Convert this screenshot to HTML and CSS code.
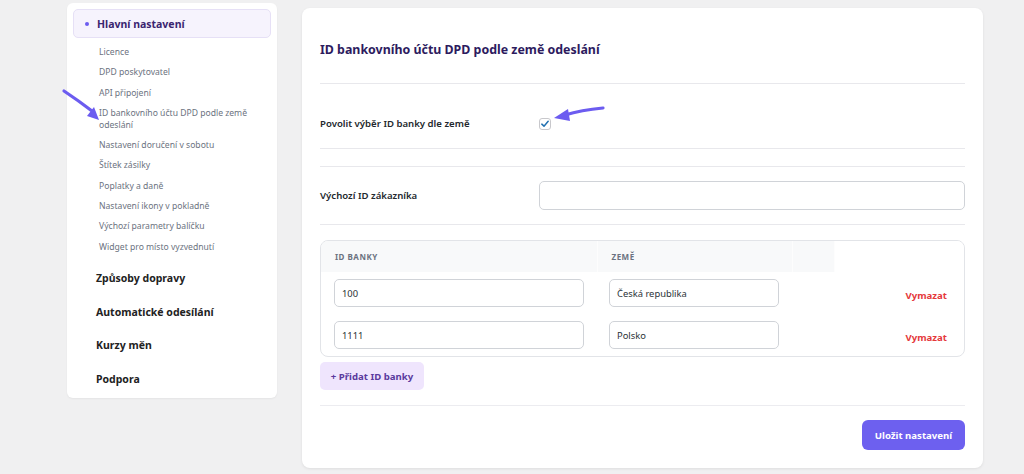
FILE: index.html
```html
<!DOCTYPE html>
<html lang="cs">
<head>
<meta charset="utf-8">
<title>Nastavení DPD</title>
<link rel="stylesheet" href="styles.css">
</head>
<body>
<div class="page">
  <aside class="sidebar">
    <div class="active-item"><span class="dot"></span>Hlavní nastavení</div>
    <ul class="sub">
      <li>Licence</li>
      <li>DPD poskytovatel</li>
      <li>API připojení</li>
      <li>ID bankovního účtu DPD podle země odeslání</li>
      <li>Nastavení doručení v sobotu</li>
      <li>Štítek zásilky</li>
      <li>Poplatky a daně</li>
      <li>Nastavení ikony v pokladně</li>
      <li>Výchozí parametry balíčku</li>
      <li>Widget pro místo vyzvednutí</li>
    </ul>
    <ul class="main-nav">
      <li>Způsoby dopravy</li>
      <li>Automatické odesílání</li>
      <li>Kurzy měn</li>
      <li>Podpora</li>
    </ul>
  </aside>
  <main class="card">
    <h1 class="title">ID bankovního účtu DPD podle země odeslání</h1>
    <div class="row row-check">
      <span class="label">Povolit výběr ID banky dle země</span>
      <span class="checkbox"><svg viewBox="0 0 12 12" width="10" height="10"><path d="M2.2 6.2 L4.8 8.6 L9.8 2.8" fill="none" stroke="#2271b1" stroke-width="1.8" stroke-linecap="round" stroke-linejoin="round"/></svg></span>
    </div>
    <div class="spacer"></div>
    <div class="row row-input">
      <span class="label">Výchozí ID zákazníka</span>
      <span class="input wide"></span>
    </div>
    <div class="table-wrap">
      <table class="banks">
        <thead>
          <tr><th class="c1">ID banky</th><th class="c2">Země</th><th class="c3"></th><th class="c4"></th></tr>
        </thead>
        <tbody>
          <tr>
            <td class="c1"><span class="input">100</span></td>
            <td class="c2"><span class="input sel">Česká republika</span></td>
            <td class="c3"></td>
            <td class="c4"><span class="del">Vymazat</span></td>
          </tr>
          <tr>
            <td class="c1"><span class="input">1111</span></td>
            <td class="c2"><span class="input sel">Polsko</span></td>
            <td class="c3"></td>
            <td class="c4"><span class="del">Vymazat</span></td>
          </tr>
        </tbody>
      </table>
    </div>
    <div class="add-row"><button class="add">+ Přidat ID banky</button></div>
    <div class="save-row"><button class="save">Uložit nastavení</button></div>
  </main>
</div>
<svg class="arrow arrow-left" width="44" height="36" viewBox="0 0 44 36">
  <path d="M3 3 Q18 13 31 23" fill="none" stroke="#6c5cf0" stroke-width="3.2" stroke-linecap="round"/>
  <path d="M26 28 L38 32 L33 19 Z" fill="#6c5cf0"/>
</svg>
<svg class="arrow arrow-right" width="56" height="20" viewBox="0 0 56 20">
  <path d="M52 4 Q30 6 14 11" fill="none" stroke="#6c5cf0" stroke-width="3.2" stroke-linecap="round"/>
  <path d="M17 5 L3 14 L19 17 Z" fill="#6c5cf0"/>
</svg>
</body>
</html>
```
FILE: styles.css
```css
* { box-sizing: border-box; }
html, body { margin: 0; padding: 0; }
body {
  background: #f0f0f1;
  font-family: "Noto Sans", "Open Sans", sans-serif;
  color: #1f2937;
  width: 1024px;
  height: 474px;
  overflow: hidden;
  position: relative;
}
.page {
  display: flex;
  align-items: flex-start;
  gap: 25px;
  padding-left: 67px;
}
.sidebar {
  width: 210px;
  margin-top: 3px;
  background: #fff;
  border-radius: 6px;
  box-shadow: 0 1px 2px rgba(0,0,0,0.05);
  padding: 6px 6px 2px;
}
.active-item {
  display: flex;
  align-items: center;
  height: 29px;
  background: #f6f3fd;
  border: 1px solid #e6e0f6;
  border-radius: 5px;
  padding-left: 11px;
  font-size: 10.5px;
  font-weight: 700;
  color: #3a2570;
}
.dot {
  width: 4px; height: 4px;
  border-radius: 50%;
  background: #6c5cf0;
  margin-right: 8px;
}
.sub {
  list-style: none;
  margin: 0;
  padding: 4px 0 0 26px;
}
.sub li {
  font-size: 8.6px;
  line-height: 12px;
  color: #6b7280;
  padding: 4px 0 4.3px;
}
.main-nav {
  list-style: none;
  margin: 0;
  padding: 5px 0 0 23px;
}
.main-nav li {
  font-size: 10.5px;
  font-weight: 700;
  color: #222;
  height: 33.6px;
  line-height: 33.6px;
}
.card {
  width: 681px;
  margin-top: 8px;
  height: 460px;
  background: #fff;
  border-radius: 8px;
  box-shadow: 0 1px 3px rgba(0,0,0,0.08);
  padding: 0 18px;
}
.title {
  margin: 0;
  padding: 33px 0 24px;
  font-size: 12.4px;
  line-height: 18px;
  font-weight: 700;
  color: #2d1b5e;
  border-bottom: 1px solid #e8e8ec;
}
.row {
  display: flex;
  align-items: center;
}
.label {
  width: 219px;
  font-size: 9.6px;
  font-weight: 600;
  color: #23282d;
}
.row-check {
  padding: 32px 0 18px;
  border-bottom: 1px solid #e8e8ec;
  height: 65px;
  align-items: flex-end;
}
.row-check .label { line-height: 12px; }
.checkbox {
  width: 12px; height: 12px;
  border: 1px solid #c8c8cc;
  border-radius: 3px;
  display: flex;
  align-items: center;
  justify-content: center;
}
.spacer {
  height: 18px;
  border-bottom: 1px solid #e8e8ec;
}
.row-input {
  padding: 14px 0 14px;
  border-bottom: 1px solid #e8e8ec;
}
.input {
  display: flex;
  align-items: center;
  height: 28px;
  border: 1px solid #d0d3d8;
  border-radius: 5px;
  background: #fff;
  padding-left: 7px;
  font-size: 9.4px;
  color: #2c3338;
}
.input.wide { width: 426px; height: 29px; }
.table-wrap {
  margin-top: 15px;
  border: 1px solid #e2e4e8;
  border-radius: 8px;
  overflow: hidden;
}
.banks {
  width: 100%;
  border-collapse: collapse;
  table-layout: fixed;
}
.banks th {
  height: 31px;
  text-align: left;
  font-size: 8px;
  font-weight: 700;
  letter-spacing: 0.5px;
  text-transform: uppercase;
  color: #6b7280;
  background: #f8f9fa;
  padding: 0 0 0 14px;
  border-right: 1px solid #fdfdfd;
}
.banks th.c4 { background: #fff; border-right: 0; }
.banks .c1 { width: 276px; }
.banks .c2 { width: 195px; }
.banks .c3 { width: 42px; }
.banks td {
  padding: 7px 0;
  vertical-align: middle;
}
.banks td.c1 { padding-left: 13px; padding-right: 11px; }
.banks td.c2 { padding-left: 12px; padding-right: 12px; }
.banks td.c1 .input { width: 250px; }
.banks td.c2 .input { width: 170px; }
.banks td.c4 { text-align: right; padding-right: 17px; }
.del {
  font-size: 9.6px;
  font-weight: 700;
  color: #e5383b;
}
.add-row {
  padding: 5px 0 15px;
  border-bottom: 1px solid #ececf0;
}
.add {
  display: block;
  width: 104px;
  height: 28px;
  border: 0;
  border-radius: 5px;
  background: #efe5fd;
  color: #5a3a9e;
  font-family: inherit;
  font-size: 9.6px;
  font-weight: 700;
  padding: 0;
}
.save-row {
  display: flex;
  justify-content: flex-end;
  padding-top: 14px;
}
.save {
  width: 103px;
  height: 30px;
  border: 0;
  border-radius: 6px;
  background: #6d60ef;
  color: #fff;
  font-family: inherit;
  font-size: 9.6px;
  font-weight: 700;
  padding: 0;
}
.arrow { position: absolute; }
.arrow-left { left: 61px; top: 88px; }
.arrow-right { left: 551px; top: 104px; }
```
